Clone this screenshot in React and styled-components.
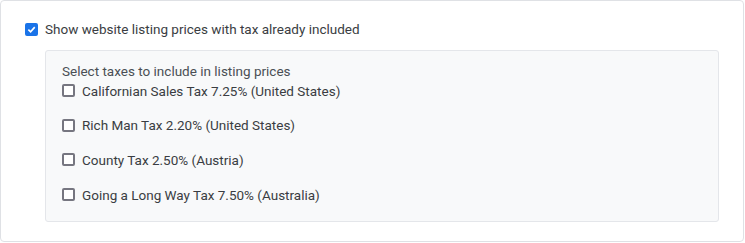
import React, { useState } from "react";
import styled, { createGlobalStyle } from "styled-components";

const GlobalStyle = createGlobalStyle`
  body {
    margin: 0;
    background: #ffffff;
    font-family: Roboto, "Liberation Sans", sans-serif;
  }
`;

const Card = styled.div`
  box-sizing: border-box;
  width: 744px;
  height: 242px;
  border: 1px solid #dfe1e5;
  border-radius: 4px;
  padding: 18px 24px 0 24px;
  background: #fff;
`;

const Row = styled.label`
  display: flex;
  align-items: center;
  height: 20px;
  gap: 7px;
  font-size: 13.5px;
  color: #3a3d42;
  cursor: pointer;
`;

const Box = styled.span`
  box-sizing: border-box;
  width: 13px;
  height: 13px;
  flex: none;
  border-radius: 2px;
  border: 2px solid ${(p) => (p.checked ? "#1a73e8" : "#767680")};
  background: ${(p) => (p.checked ? "#1a73e8" : "#fff")};
  display: flex;
  align-items: center;
  justify-content: center;
`;

const Panel = styled.div`
  margin: 11px 0 0 20px;
  border: 1px solid #e4e6ea;
  border-radius: 3px;
  background: #f8f9fa;
  padding: 11px 16px 16px 16px;
  display: flex;
  flex-direction: column;
  gap: 14.7px;
`;

const Title = styled.div`
  font-size: 13.5px;
  line-height: 18px;
  color: #4a4f55;
  margin-bottom: -14.2px;
`;

function Check({ checked, onChange, children }) {
  return (
    <Row onClick={onChange}>
      <Box checked={checked}>
        {checked && (
          <svg width="9" height="9" viewBox="0 0 10 10">
            <path d="M1.5 5.2 L4 7.6 L8.6 2.4" fill="none" stroke="#fff" strokeWidth="1.8" />
          </svg>
        )}
      </Box>
      <span>{children}</span>
    </Row>
  );
}

const taxes = [
  "Californian Sales Tax 7.25% (United States)",
  "Rich Man Tax 2.20% (United States)",
  "County Tax 2.50% (Austria)",
  "Going a Long Way Tax 7.50% (Australia)",
];

export default function App() {
  const [included, setIncluded] = useState(true);
  const [picked, setPicked] = useState([]);

  const toggle = (i) =>
    setPicked((p) => (p.includes(i) ? p.filter((x) => x !== i) : [...p, i]));

  return (
    <>
      <GlobalStyle />
      <Card>
        <Check checked={included} onChange={() => setIncluded(!included)}>
          Show website listing prices with tax already included
        </Check>
        {included && (
          <Panel>
            <Title>Select taxes to include in listing prices</Title>
            {taxes.map((t, i) => (
              <Check key={t} checked={picked.includes(i)} onChange={() => toggle(i)}>
                {t}
              </Check>
            ))}
          </Panel>
        )}
      </Card>
    </>
  );
}
